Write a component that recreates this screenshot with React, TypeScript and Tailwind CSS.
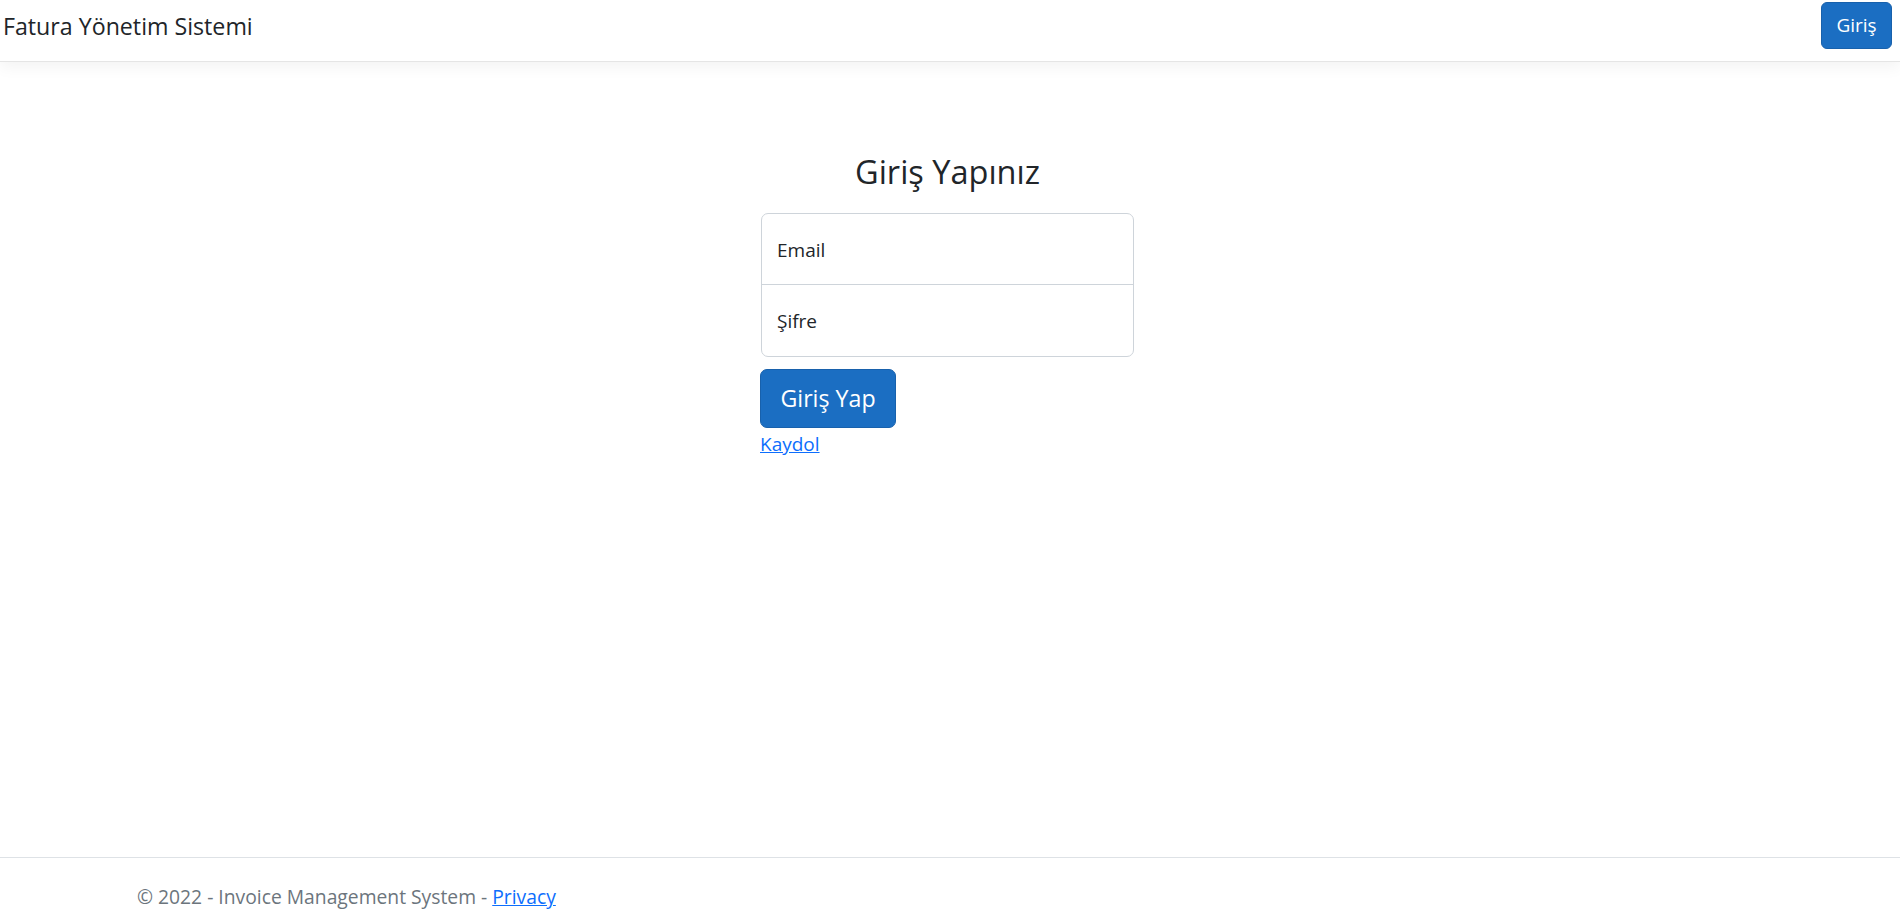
import React from "react";

export default function App() {
  const font = { fontFamily: '"Open Sans", "Noto Sans", sans-serif' };
  return (
    <div style={font} className="flex h-[917px] w-full flex-col bg-white text-[#212529]">
      <nav className="flex h-[62px] shrink-0 items-start justify-between border-b border-[#e5e5e5] bg-white pl-[3px] pr-[8px] pt-[2px] shadow-[0_5px_15px_rgba(0,0,0,0.05)]">
        <span className="text-[23.2px] leading-[48px] text-[#212529]">Fatura Yönetim Sistemi</span>
        <button className="h-[47px] w-[71px] rounded-[6px] border border-[#1861ac] bg-[#1b6ec2] text-[19px] leading-none text-white">
          Giriş
        </button>
      </nav>
      <main className="flex flex-1 justify-center pr-[5px] pt-[89px]">
        <div className="flex w-[373px] flex-col">
          <h3 className="mb-[20px] text-center text-[32.5px] font-normal leading-[42px]">Giriş Yapınız</h3>
          <div className="flex flex-col rounded-[7px] border border-[#ced4da] bg-white">
            <div className="flex h-[71px] items-center border-b border-[#ced4da] pl-[15px] pt-[2px] text-[19px]">
              Email
            </div>
            <div className="flex h-[71px] items-center pl-[15px] pt-[2px] text-[19px]">Şifre</div>
          </div>
          <div className="mt-[12px] -ml-px">
            <button className="h-[59px] w-[136px] rounded-[7px] border border-[#1861ac] bg-[#1b6ec2] text-[23.2px] leading-none text-white">
              Giriş Yap
            </button>
          </div>
          <div className="-ml-px mt-[1px]">
            <a href="#" className="text-[19px] leading-[30px] text-[#0d6efd] underline">
              Kaydol
            </a>
          </div>
        </div>
      </main>
      <footer className="h-[60px] shrink-0 border-t border-[#dee2e6] pl-[137px] pt-[24px] text-[19.3px] leading-[30px] text-[#6c757d]">
        © 2022 - Invoice Management System -{" "}
        <a href="#" className="text-[#0d6efd] underline">
          Privacy
        </a>
      </footer>
    </div>
  );
}
